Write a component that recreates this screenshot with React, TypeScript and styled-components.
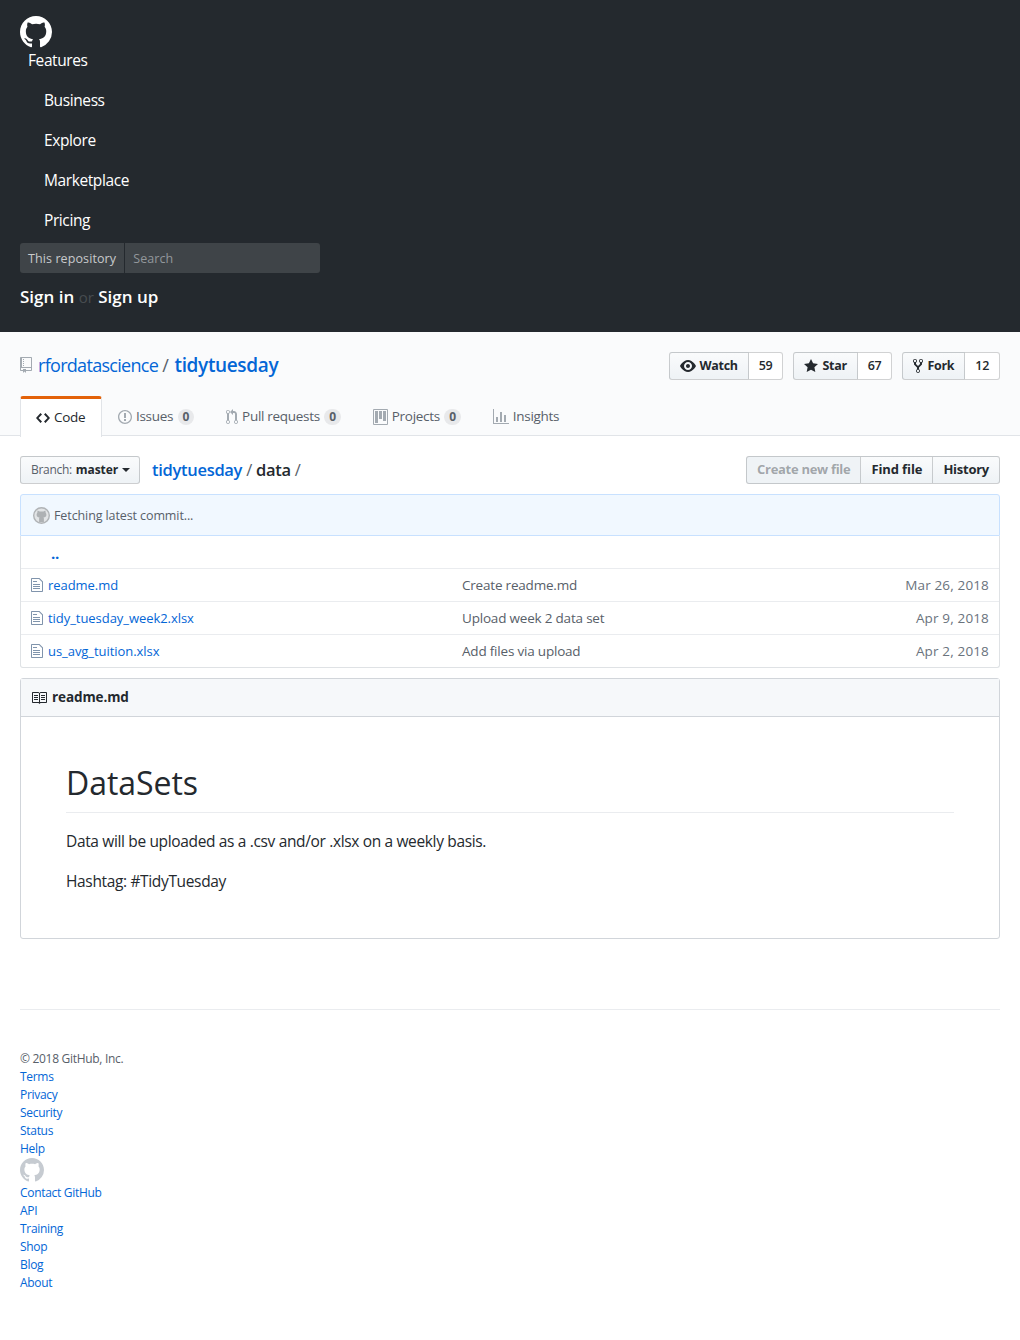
import React from 'react';
import styled, { createGlobalStyle } from 'styled-components';

const GITHUB_MARK = "M8 0C3.58 0 0 3.58 0 8c0 3.54 2.29 6.53 5.47 7.59.4.07.55-.17.55-.38 0-.19-.01-.82-.01-1.49-2.01.37-2.53-.49-2.69-.94-.09-.23-.48-.94-.82-1.13-.28-.15-.68-.52-.01-.53.63-.01 1.08.58 1.23.82.72 1.21 1.87.87 2.33.66.07-.52.28-.87.51-1.07-1.78-.2-3.64-.89-3.64-3.95 0-.87.31-1.59.82-2.15-.08-.2-.36-1.02.08-2.12 0 0 .67-.21 2.2.82.64-.18 1.32-.27 2-.27.68 0 1.36.09 2 .27 1.53-1.04 2.2-.82 2.2-.82.44 1.1.16 1.92.08 2.12.51.56.82 1.27.82 2.15 0 3.07-1.87 3.75-3.65 3.95.29.25.54.73.54 1.48 0 1.07-.01 1.93-.01 2.2 0 .21.15.46.55.38A8.013 8.013 0 0 0 16 8c0-4.42-3.58-8-8-8z";

const ICONS: Record<string, { w: number; d: string }> = {
    mark: { w: 16, d: GITHUB_MARK },
    repo: { w: 12, d: "M4 9H3V8h1v1zm0-3H3v1h1V6zm0-2H3v1h1V4zm0-2H3v1h1V2zm8-1v12c0 .55-.45 1-1 1H6v2l-1.5-1.5L3 16v-2H1c-.55 0-1-.45-1-1V1c0-.55.45-1 1-1h10c.55 0 1 .45 1 1zm-1 10H1v2h2v-1h3v1h5v-2zm0-10H2v9h9V1z" },
    eye: { w: 16, d: "M8.06 2C3 2 0 8 0 8s3 6 8.06 6C13 14 16 8 16 8s-3-6-7.94-6zM8 12c-2.2 0-4-1.78-4-4 0-2.2 1.8-4 4-4 2.22 0 4 1.8 4 4 0 2.22-1.78 4-4 4zm2-4c0 1.11-.89 2-2 2-1.11 0-2-.89-2-2 0-1.11.89-2 2-2 1.11 0 2 .89 2 2z" },
    star: { w: 14, d: "M14 6l-4.9-.64L7 1 4.9 5.36 0 6l3.6 3.26L2.67 14 7 11.67 11.33 14l-.93-4.74L14 6z" },
    fork: { w: 10, d: "M8 1a1.993 1.993 0 0 0-1 3.72V6L5 8 3 6V4.72A1.993 1.993 0 0 0 2 1a1.993 1.993 0 0 0-1 3.72V6.5l3 3v1.78A1.993 1.993 0 0 0 5 15a1.993 1.993 0 0 0 1-3.72V9.5l3-3V4.72A1.993 1.993 0 0 0 8 1zM2 4.2C1.34 4.2.8 3.65.8 3c0-.65.55-1.2 1.2-1.2.65 0 1.2.55 1.2 1.2 0 .65-.55 1.2-1.2 1.2zm3 10c-.66 0-1.2-.55-1.2-1.2 0-.65.55-1.2 1.2-1.2.65 0 1.2.55 1.2 1.2 0 .65-.55 1.2-1.2 1.2zm3-10c-.66 0-1.2-.55-1.2-1.2 0-.65.55-1.2 1.2-1.2.65 0 1.2.55 1.2 1.2 0 .65-.55 1.2-1.2 1.2z" },
    code: { w: 14, d: "M9.5 3L8 4.5 11.5 8 8 11.5 9.5 13 14 8 9.5 3zm-5 0L0 8l4.5 5L6 11.5 2.5 8 6 4.5 4.5 3z" },
    issue: { w: 14, d: "M7 2.3c3.14 0 5.7 2.56 5.7 5.7s-2.56 5.7-5.7 5.7A5.71 5.71 0 0 1 1.3 8c0-3.14 2.56-5.7 5.7-5.7zM7 1C3.14 1 0 4.14 0 8s3.14 7 7 7 7-3.14 7-7-3.14-7-7-7zm1 3H6v5h2V4zm0 6H6v2h2v-2z" },
    pull: { w: 12, d: "M11 11.28V5c-.03-.78-.34-1.47-.94-2.06C9.46 2.35 8.78 2.03 8 2H7V0L4 3l3 3V4h1c.27.02.48.11.69.31.21.2.3.42.31.69v6.28A1.993 1.993 0 0 0 10 15a1.993 1.993 0 0 0 1-3.72zm-1 2.92c-.66 0-1.2-.55-1.2-1.2 0-.65.55-1.2 1.2-1.2.65 0 1.2.55 1.2 1.2 0 .65-.55 1.2-1.2 1.2zM4 3c0-1.11-.89-2-2-2a1.993 1.993 0 0 0-1 3.72v6.56A1.993 1.993 0 0 0 2 15a1.993 1.993 0 0 0 1-3.72V4.72c.59-.34 1-.98 1-1.72zm-.8 10c0 .66-.55 1.2-1.2 1.2-.65 0-1.2-.55-1.2-1.2 0-.65.55-1.2 1.2-1.2.65 0 1.2.55 1.2 1.2zM2 4.2C1.34 4.2.8 3.65.8 3c0-.65.55-1.2 1.2-1.2.65 0 1.2.55 1.2 1.2 0 .65-.55 1.2-1.2 1.2z" },
    project: { w: 15, d: "M10 12h3V2h-3v10zm-4-2h3V2H6v8zm-4 4h3V2H2v12zm-1 1h13V1H1v14zM14 0H1a1 1 0 0 0-1 1v14a1 1 0 0 0 1 1h13a1 1 0 0 0 1-1V1a1 1 0 0 0-1-1z" },
    graph: { w: 16, d: "M16 14v1H0V0h1v14h15zM5 13H3V8h2v5zm4 0H7V3h2v10zm4 0h-2V6h2v7z" },
    file: { w: 12, d: "M6 5H2V4h4v1zM2 8h7V7H2v1zm0 2h7V9H2v1zm0 2h7v-1H2v1zm10-7.5V14c0 .55-.45 1-1 1H1c-.55 0-1-.45-1-1V2c0-.55.45-1 1-1h7.5L12 4.5zM11 5L8 2H1v12h10V5z" },
    book: { w: 16, d: "M3 5h4v1H3V5zm0 3h4V7H3v1zm0 2h4V9H3v1zm11-5h-4v1h4V5zm0 2h-4v1h4V7zm0 2h-4v1h4V9zm2-6v9c0 .55-.45 1-1 1H9.5l-1 1-1-1H2c-.55 0-1-.45-1-1V3c0-.55.45-1 1-1h5.5l1 1 1-1H15c.55 0 1 .45 1 1zm-8 .5L7.5 3H2v9h6V3.5zm7-.5H9.5l-.5.5V12h6V3z" },
};

interface IconProps {
    name: string;
    size?: number;
    color?: string;
}

const Icon = ({ name, size = 16, color = 'currentColor' }: IconProps) => {
    const { w, d } = ICONS[name];
    return (
        <IconSvg viewBox={`0 0 ${w} 16`} width={(w * size) / 16} height={size} fill={color}>
            <path fillRule="evenodd" d={d} />
        </IconSvg>
    );
};

// the placeholder avatar: ring with the cat silhouette inside
const AvatarMark = () => (
    <IconSvg viewBox="0 0 17 17" width={17} height={17}>
        <circle cx="8.5" cy="8.5" r="7.8" fill="#e2e4e6" stroke="#b0b3b6" strokeWidth="1.4" />
        <path
            fill="#aeb1b4"
            d="M4.6 3.6l2 1h3.8l2-1 .3 2.2c.5.6.7 1.2.7 1.9 0 1.8-1.2 2.7-3 2.9.3.3.5.7.5 1.2v3.2H6.100v-3.200c0-.5.2-.9.5-1.200-1.800-.2-3-1.100-3-2.900 0-.7.2-1.300.7-1.900z"
        />
    </IconSvg>
);

const NAV = ['Features', 'Business', 'Explore', 'Marketplace', 'Pricing'];
const TABS = [
    { icon: 'issue', label: 'Issues', count: 0 },
    { icon: 'pull', label: 'Pull requests', count: 0 },
    { icon: 'project', label: 'Projects', count: 0 },
    { icon: 'graph', label: 'Insights' },
];
const ACTIONS = [
    { icon: 'eye', label: 'Watch', count: 59 },
    { icon: 'star', label: 'Star', count: 67 },
    { icon: 'fork', label: 'Fork', count: 12 },
];
const FILES = [
    { name: 'readme.md', message: 'Create readme.md', age: 'Mar 26, 2018' },
    { name: 'tidy_tuesday_week2.xlsx', message: 'Upload week 2 data set', age: 'Apr 9, 2018' },
    { name: 'us_avg_tuition.xlsx', message: 'Add files via upload', age: 'Apr 2, 2018' },
];

const App = () => (
    <>
        <GlobalStyle />
        <Header>
            <Icon name="mark" size={32} color="#fff" />
            <NavList>
                {NAV.map((item, i) => (
                    <NavItem key={item} $first={i === 0}>{item}</NavItem>
                ))}
            </NavList>
            <SearchBox>
                <SearchScope>This repository</SearchScope>
                <SearchHint>Search</SearchHint>
            </SearchBox>
            <SignRow>
                <SignLink>Sign in</SignLink> <SignOr>or</SignOr> <SignLink>Sign up</SignLink>
            </SignRow>
        </Header>

        <PageHead>
            <TitleRow>
                <RepoTitle>
                    <Icon name="repo" size={16} color="#a3aab1" />
                    <OwnerLink>rfordatascience</OwnerLink>
                    <TitleSlash>/</TitleSlash>
                    <RepoLink>tidytuesday</RepoLink>
                </RepoTitle>
                <Actions>
                    {ACTIONS.map(a => (
                        <ActionGroup key={a.label}>
                            <ActionButton>
                                <Icon name={a.icon} size={16} color="#24292e" />
                                {a.label}
                            </ActionButton>
                            <ActionCount>{a.count}</ActionCount>
                        </ActionGroup>
                    ))}
                </Actions>
            </TitleRow>
            <Tabs>
                <ActiveTab>
                    <Icon name="code" size={16} color="#24292e" />
                    Code
                </ActiveTab>
                {TABS.map(t => (
                    <Tab key={t.label}>
                        <Icon name={t.icon} size={16} color="#a3aab1" />
                        {t.label}
                        {t.count !== undefined && <Counter>{t.count}</Counter>}
                    </Tab>
                ))}
            </Tabs>
        </PageHead>

        <Main>
            <FileNav>
                <BranchButton>
                    <BranchLabel>Branch:</BranchLabel> <strong>master</strong>
                    <Caret />
                </BranchButton>
                <Breadcrumb>
                    <CrumbLink>tidytuesday</CrumbLink>
                    <CrumbSlash>/</CrumbSlash>
                    <CrumbFinal>data</CrumbFinal>
                    <CrumbSlash>/</CrumbSlash>
                </Breadcrumb>
                <FileButtons>
                    <FileButton $disabled>Create new file</FileButton>
                    <FileButton>Find file</FileButton>
                    <FileButton>History</FileButton>
                </FileButtons>
            </FileNav>

            <CommitBar>
                <AvatarMark />
                <CommitText>Fetching latest commit...</CommitText>
            </CommitBar>
            <FileTable>
                <ParentRow>..</ParentRow>
                {FILES.map(f => (
                    <FileRow key={f.name}>
                        <FileName>
                            <Icon name="file" size={16} color="#8094ac" />
                            <FileLink>{f.name}</FileLink>
                        </FileName>
                        <FileMessage>{f.message}</FileMessage>
                        <FileAge>{f.age}</FileAge>
                    </FileRow>
                ))}
            </FileTable>

            <Readme>
                <ReadmeHead>
                    <Icon name="book" size={16} color="#24292e" />
                    readme.md
                </ReadmeHead>
                <ReadmeBody>
                    <ReadmeTitle>DataSets</ReadmeTitle>
                    <ReadmeText>Data will be uploaded as a .csv and/or .xlsx on a weekly basis.</ReadmeText>
                    <ReadmeText>Hashtag: #TidyTuesday</ReadmeText>
                </ReadmeBody>
            </Readme>
        </Main>

        <Footer>
            <FooterRule />
            <Copyright>© 2018 GitHub, Inc.</Copyright>
            {['Terms', 'Privacy', 'Security', 'Status', 'Help'].map(l => <FooterLink key={l}>{l}</FooterLink>)}
            <FooterMark>
                <Icon name="mark" size={24} color="#c6cbd1" />
            </FooterMark>
            {['Contact GitHub', 'API', 'Training', 'Shop', 'Blog', 'About'].map(l => <FooterLink key={l}>{l}</FooterLink>)}
        </Footer>
    </>
);

export default App;

const GlobalStyle = createGlobalStyle`
    html, body {
        margin: 0;
        background: #fff;
    }
    body {
        font-family: 'Open Sans', 'Noto Sans', sans-serif;
        font-size: 14px;
        line-height: 1.5;
        color: #24292e;
        letter-spacing: -0.3px;
    }
`;

const IconSvg = styled.svg`
    display: block;
    flex: none;
`;

const Header = styled.header`
    box-sizing: border-box;
    height: 332px;
    padding: 16px 20px 0;
    background: #24292e;
    color: #fff;
`;

const NavList = styled.div`
    display: flex;
    flex-direction: column;
`;

const NavItem = styled.div<{ $first?: boolean }>`
    font-size: 15.5px;
    line-height: 24px;
    letter-spacing: -0.4px;
    padding: ${p => (p.$first ? '0 8px 8px' : '8px 24px')};
`;

const SearchBox = styled.div`
    display: flex;
    width: 300px;
    height: 30px;
    margin-top: 3px;
    border-radius: 3px;
    background: #3f4448;
    font-size: 12.5px;
    letter-spacing: 0.1px;
    line-height: 31px;
`;

const SearchScope = styled.div`
    padding: 0 8px;
    color: #c8cacc;
    border-right: 1px solid #24292e;
`;

const SearchHint = styled.div`
    padding: 0 8px;
    color: #92979b;
`;

const SignRow = styled.div`
    margin-top: 12px;
    font-size: 17px;
    letter-spacing: 0;
    line-height: 24px;
`;

const SignLink = styled.span`
    font-weight: 600;
`;

const SignOr = styled.span`
    color: #474c50;
    font-size: 15px;
`;

const PageHead = styled.div`
    box-sizing: border-box;
    height: 104px;
    padding: 20px 20px 0;
    background: #fafbfc;
    border-bottom: 1px solid #e1e4e8;
`;

const TitleRow = styled.div`
    display: flex;
    justify-content: space-between;
    height: 44px;
`;

const RepoTitle = styled.div`
    display: flex;
    align-items: center;
    height: 26px;
    font-size: 18px;
    color: #586069;
    svg {
        width: 12px;
    }
`;

const OwnerLink = styled.a`
    color: #0366d6;
    margin-left: 6px;
    letter-spacing: -0.7px;
`;

const TitleSlash = styled.span`
    margin: 0 6px 0 4px;
`;

const RepoLink = styled.a`
    color: #0366d6;
    font-size: 19px;
    font-weight: 600;
    letter-spacing: -0.35px;
`;

const Actions = styled.div`
    display: flex;
    gap: 10px;
`;

const ActionGroup = styled.div`
    display: flex;
    height: 28px;
    font-size: 12.5px;
    font-weight: 700;
    letter-spacing: -0.3px;
    line-height: 26px;
`;

const ActionButton = styled.div`
    display: flex;
    align-items: center;
    gap: 4px;
    box-sizing: border-box;
    padding: 0 10px;
    border: 1px solid rgba(27, 31, 35, 0.2);
    border-radius: 3px 0 0 3px;
    background: linear-gradient(-180deg, #fafbfc, #eff3f6 90%);
`;

const ActionCount = styled.div`
    box-sizing: border-box;
    padding: 0 10px;
    border: 1px solid rgba(27, 31, 35, 0.2);
    border-left: 0;
    border-radius: 0 3px 3px 0;
    background: #fff;
    font-weight: 600;
`;

const Tabs = styled.div`
    display: flex;
    height: 40px;
`;

const Tab = styled.div`
    display: flex;
    align-items: center;
    gap: 4px;
    box-sizing: border-box;
    height: 40px;
    padding: 1px 15px 0;
    margin-right: 2px;
    color: #586069;
    font-size: 13.5px;
`;

const ActiveTab = styled(Tab)`
    width: 82px;
    height: 41px;
    margin-right: 1px;
    color: #24292e;
    background: #fff;
    border: 1px solid #e1e4e8;
    border-top: 3px solid #e36209;
    border-bottom: 0;
    border-radius: 3px 3px 0 0;
    padding: 0 15px 1px;
`;

const Counter = styled.span`
    padding: 0 5px;
    margin-left: 0.4px;
    border-radius: 20px;
    background: rgba(27, 31, 35, 0.08);
    color: #586069;
    font-size: 12px;
    font-weight: 700;
    line-height: 16px;
`;

const Main = styled.main`
    padding: 20px 20px 0;
`;

const FileNav = styled.div`
    display: flex;
    align-items: center;
    height: 28px;
    margin-bottom: 10px;
`;

const BranchButton = styled.div`
    display: flex;
    align-items: center;
    gap: 4px;
    box-sizing: border-box;
    width: 120px;
    height: 28px;
    padding: 0 10px;
    border: 1px solid rgba(27, 31, 35, 0.2);
    border-radius: 3px;
    background: linear-gradient(-180deg, #fafbfc, #eff3f6 90%);
    font-size: 12px;
    strong {
        font-weight: 700;
        letter-spacing: -0.1px;
    }
`;

const BranchLabel = styled.span`
    color: #586069;
`;

const Caret = styled.span`
    width: 0;
    height: 0;
    border: 4px solid transparent;
    border-top-color: #24292e;
    margin-top: 4px;
`;

const Breadcrumb = styled.div`
    display: flex;
    align-items: center;
    margin-left: 12px;
    font-size: 16.5px;
    font-weight: 600;
`;

const CrumbLink = styled.a`
    color: #0366d6;
`;

const CrumbSlash = styled.span`
    margin: 0 4px;
    color: #586069;
    font-weight: 400;
`;

const CrumbFinal = styled.span`
    color: #24292e;
`;

const FileButtons = styled.div`
    display: flex;
    margin-left: auto;
`;

const FileButton = styled.div<{ $disabled?: boolean }>`
    box-sizing: border-box;
    height: 28px;
    padding: 0 10px;
    margin-left: -1px;
    border: 1px solid rgba(27, 31, 35, 0.2);
    background: ${p => (p.$disabled ? '#eff3f6' : 'linear-gradient(-180deg, #fafbfc, #eff3f6 90%)')};
    color: ${p => (p.$disabled ? 'rgba(36, 41, 46, 0.4)' : '#24292e')};
    font-size: 13px;
    font-weight: 700;
    letter-spacing: ${p => (p.$disabled ? '-0.3px' : '-0.1px')};
    line-height: 25px;
    &:first-child {
        border-radius: 3px 0 0 3px;
    }
    &:last-child {
        border-radius: 0 3px 3px 0;
        letter-spacing: -0.25px;
    }
`;

const CommitBar = styled.div`
    display: flex;
    align-items: center;
    gap: 4px;
    box-sizing: border-box;
    height: 42px;
    padding: 1px 12px 0;
    background: #f1f8ff;
    border: 1px solid #c8e1ff;
    border-radius: 3px 3px 0 0;
    color: #586069;
    font-size: 12.5px;
    letter-spacing: -0.1px;
`;

const CommitText = styled.span`
    padding-top: 1px;
`;

const FileTable = styled.div`
    border: 1px solid #dfe2e5;
    border-top: 0;
    border-radius: 0 0 3px 3px;
`;

const ParentRow = styled.div`
    height: 32px;
    padding-left: 30px;
    color: #0366d6;
    font-size: 15px;
    font-weight: 700;
    line-height: 35px;
`;

const FileRow = styled.div`
    display: grid;
    grid-template-columns: 441px 1fr auto;
    align-items: center;
    height: 32px;
    padding-right: 10px;
    border-top: 1px solid #eaecef;
`;

const FileName = styled.div`
    display: flex;
    align-items: center;
    gap: 5px;
    padding-left: 10px;
    svg {
        width: 12px;
        height: 16px;
    }
`;

const FileLink = styled.a`
    padding-top: 2px;
    color: #0366d6;
    font-size: 13px;
    letter-spacing: -0.05px;
`;

const FileMessage = styled.div`
    color: #586069;
    font-size: 13.5px;
    letter-spacing: -0.2px;
`;

const FileAge = styled.div`
    color: #6a737d;
    font-size: 13.5px;
    letter-spacing: 0.15px;
`;

const Readme = styled.section`
    margin-top: 10px;
    border: 1px solid #d1d5da;
    border-radius: 3px;
`;

const ReadmeHead = styled.div`
    display: flex;
    align-items: center;
    gap: 5px;
    height: 37px;
    padding-left: 10px;
    background: #f6f8fa;
    border-bottom: 1px solid #d1d5da;
    font-size: 13.5px;
    font-weight: 700;
    letter-spacing: -0.1px;
`;

const ReadmeBody = styled.div`
    box-sizing: border-box;
    height: 221px;
    padding: 46px 45px 0;
`;

const ReadmeTitle = styled.h1`
    margin: 0 0 16px;
    padding-bottom: 9px;
    border-bottom: 1px solid #eaecef;
    font-size: 32px;
    font-weight: 400;
    letter-spacing: -0.05px;
    line-height: 1.25;
`;

const ReadmeText = styled.p`
    margin: 0 0 16px;
    font-size: 15.5px;
    letter-spacing: -0.35px;
    line-height: 24px;
`;

const Footer = styled.footer`
    padding: 70px 20px 0;
    font-size: 12px;
    line-height: 18px;
`;

const FooterRule = styled.div`
    border-top: 1px solid #eaecef;
    margin-bottom: 40px;
`;

const Copyright = styled.div`
    color: #586069;
`;

const FooterLink = styled.a`
    display: block;
    color: #0366d6;
`;

const FooterMark = styled.div`
    height: 26px;
`;
